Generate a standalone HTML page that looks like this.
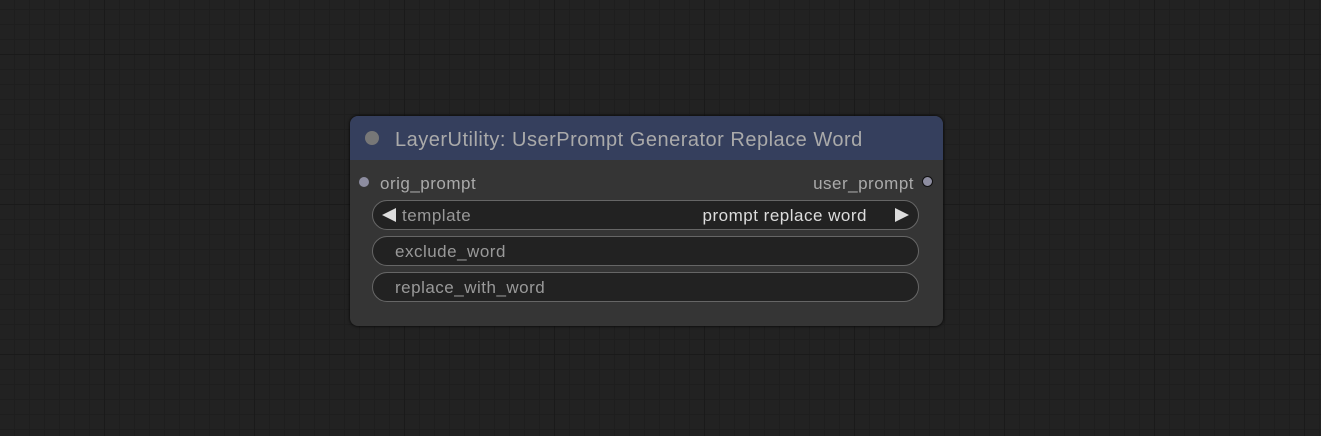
<!DOCTYPE html>
<html><head><style>
html,body{margin:0;padding:0}
body{width:1321px;height:436px;overflow:hidden;position:relative;font-family:"Liberation Sans",Arial,sans-serif;
background-color:#222;
background-image:
linear-gradient(to right,#1a1a1a 1px,transparent 1px),
linear-gradient(to bottom,#1a1a1a 1px,transparent 1px),
linear-gradient(to right,#1e1e1e 1px,transparent 1px),
linear-gradient(to bottom,#1e1e1e 1px,transparent 1px);
background-size:150px 150px,150px 150px,15px 15px,15px 15px;
background-position:104px 54px,104px 54px,14px 9px,14px 9px;}
.node{position:absolute;left:350px;top:116px;width:593px;height:210px;background:#353535;border-radius:8px;box-shadow:0 0 3px #000;overflow:hidden}
.title{height:44px;background:#353f5d;position:relative}
.title .dot{position:absolute;left:15px;top:15px;width:14px;height:14px;border-radius:50%;background:#777}
.title span{position:absolute;left:45px;top:13px;font-size:20px;color:#aaa;letter-spacing:0.5px}
.lbl{position:absolute;font-size:17px;color:#aaa;letter-spacing:0.5px}
.sock{position:absolute;width:10px;height:10px;border-radius:50%}
.w{position:absolute;left:22px;width:545px;height:28px;border:1px solid #666;border-radius:15px;background:#222;font-size:17px;color:#999}
.w span{position:absolute;top:5px;letter-spacing:0.5px}
.w svg{position:absolute;top:6px}
</style></head><body>
<div class="node">
<div class="title"><div class="dot"></div><span>LayerUtility: UserPrompt Generator Replace Word</span></div>
<div class="sock" style="left:9px;top:61px;background:#8d8da0"></div>
<div class="lbl" style="left:30px;top:58px">orig_prompt</div>
<div class="lbl" style="right:29px;top:58px">user_prompt</div>
<div class="sock" style="left:572px;top:60px;width:9px;height:9px;background:#8d8da0;border:1px solid #111"></div>
<div class="w" style="top:84px">
<svg style="left:8px" width="16" height="16"><polygon points="1,8 15,1 15,15" fill="#ddd"/></svg>
<span style="left:29px">template</span><span style="right:51px;color:#ddd">prompt replace word</span>
<svg style="right:8px" width="16" height="16"><polygon points="15,8 1,1 1,15" fill="#ddd"/></svg></div>
<div class="w" style="top:120px"><span style="left:22px">exclude_word</span></div>
<div class="w" style="top:156px"><span style="left:22px">replace_with_word</span></div>
</div>
</body></html>
